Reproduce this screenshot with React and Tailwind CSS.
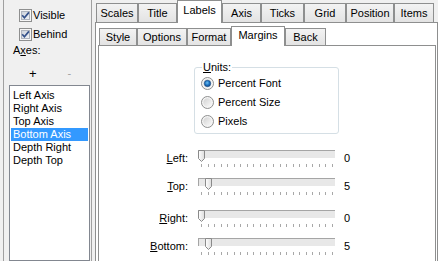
import React from 'react'

const topTabs = [
  { label: 'Scales', w: 'w-[42px]' },
  { label: 'Title', w: 'w-[39px]' },
  { label: 'Labels', w: 'w-[45px]', active: true },
  { label: 'Axis', w: 'w-[39px]' },
  { label: 'Ticks', w: 'w-[43px]' },
  { label: 'Grid', w: 'w-[42px]' },
  { label: 'Position', w: 'w-[48px]' },
  { label: 'Items', w: 'w-[40px]' },
]

const subTabs = [
  { label: 'Style', w: 'w-[38px]' },
  { label: 'Options', w: 'w-[50px]' },
  { label: 'Format', w: 'w-[44px]' },
  { label: 'Margins', w: 'w-[54px]', active: true },
  { label: 'Back', w: 'w-[41px]' },
]

const axes = ['Left Axis', 'Right Axis', 'Top Axis', 'Bottom Axis', 'Depth Right', 'Depth Top']

function CheckBox() {
  return (
    <svg width="13" height="13" viewBox="0 0 13 13" className="shrink-0">
      <defs>
        <linearGradient id="cbin" x1="0" y1="0" x2="1" y2="1">
          <stop offset="0" stopColor="#cbd1da" />
          <stop offset="1" stopColor="#f3f5f8" />
        </linearGradient>
      </defs>
      <rect x="0.5" y="0.5" width="12" height="12" fill="#f6f6f6" stroke="#8e8f8f" />
      <rect x="2.5" y="2.5" width="8" height="8" fill="url(#cbin)" stroke="#aeb4be" />
      <path d="M3.2 6.3 L5.4 8.8 L9.9 3.4" fill="none" stroke="#34518a" strokeWidth="1.7" />
    </svg>
  )
}

function Radio({ on }) {
  return (
    <svg width="13" height="13" viewBox="0 0 13 13" className="shrink-0">
      <defs>
        <linearGradient id="rdin" x1="0" y1="0" x2="1" y2="1">
          <stop offset="0" stopColor="#d2d2d2" />
          <stop offset="1" stopColor="#fafafa" />
        </linearGradient>
        <radialGradient id="rdot" cx="0.45" cy="0.4" r="0.6">
          <stop offset="0" stopColor="#6fc0f2" />
          <stop offset="0.6" stopColor="#1a70c0" />
          <stop offset="1" stopColor="#1b4f8c" />
        </radialGradient>
      </defs>
      <circle cx="6.5" cy="6.5" r="6" fill="#f4f4f4" stroke="#8e8f8f" />
      <circle cx="6.5" cy="6.5" r="4.2" fill="url(#rdin)" />
      {on && <circle cx="6.5" cy="6.5" r="3.2" fill="url(#rdot)" stroke="#1a4a80" strokeWidth="0.6" />}
    </svg>
  )
}

function Tab({ label, w, active, small }) {
  if (active) {
    return (
      <div className={`${w} ${small ? 'h-[20px] pb-[3px]' : 'h-[23px] pb-[4px]'} relative z-10 -mb-px bg-white border border-b-0 border-[#8e8f8f] flex items-center justify-center`}>
        {label}
      </div>
    )
  }
  return (
    <div className={`${w} ${small ? 'h-[17px]' : 'h-[19px]'} bg-gradient-to-b from-[#f3f3f3] to-[#e3e3e3] border border-b-0 border-[#8e8f8f] flex items-center justify-center`}>
      {label}
    </div>
  )
}

function Slider({ label, akey, value, pos, className = '' }) {
  return (
    <div className={`flex items-start h-[28px] ${className}`}>
      <div className="w-[89px] text-right pt-[2px] leading-[13px]">
        <span className="underline">{akey}</span>
        {label.slice(1)}
      </div>
      <div className="ml-[10px] w-[137px] flex flex-col relative">
        <div className="h-[8px] bg-[#e8e8e8] border-t border-l border-[#a5a5a5]" />
        <svg width="7" height="12" viewBox="0 0 7 12" className={`absolute top-0 ${pos}`}>
          <defs>
            <linearGradient id="thb" x1="0" y1="0" x2="1" y2="0">
              <stop offset="0" stopColor="#ffffff" />
              <stop offset="1" stopColor="#dcdcdc" />
            </linearGradient>
          </defs>
          <path d="M0.5 0.5 H6.5 V8.5 L3.5 11.5 L0.5 8.5 Z" fill="url(#thb)" stroke="#8a8a8a" />
        </svg>
        <div className="flex justify-between pl-[3px] pr-[2px] mt-[6px]">
          {Array.from({ length: 21 }).map((_, i) => (
            <div key={i} className="w-px h-[3px] bg-[#a8a8a8]" />
          ))}
        </div>
      </div>
      <div className="ml-[9px] pt-[2px] leading-[13px]">{value}</div>
    </div>
  )
}

export default function App() {
  return (
    <div className="w-[438px] h-[261px] bg-[#f0f0f0] flex overflow-hidden text-[11px] leading-[13px] text-black font-['Liberation_Sans',Arial,sans-serif]">
      {/* left panel */}
      <div className="ml-[3px] w-[89px] h-full border-l border-r border-[#a0a0a0] flex flex-col shrink-0">
        <div className="pt-[8px] pl-[15px] flex flex-col gap-[5px]">
          <div className="flex items-center h-[14px] gap-[1px]">
            <CheckBox />
            <span>Visible</span>
          </div>
          <div className="flex items-center h-[14px] gap-[1px]">
            <CheckBox />
            <span>Behind</span>
          </div>
        </div>
        <div className="pl-[9px] mt-[3px]">
          A<span className="underline">x</span>es:
        </div>
        <div className="flex h-[14px] mt-[9px] items-center">
          <span className="ml-[25px] text-[13px]">+</span>
          <span className="ml-[31px] text-[#a0a0a0]">-</span>
        </div>
        <div className="ml-[5px] mr-px mt-[5px] flex-1 bg-white border border-[#828790] pt-[3px]">
          {axes.map((a) => (
            <div
              key={a}
              className={`h-[13px] leading-[13px] mx-px pl-[2px] ${a === 'Bottom Axis' ? 'bg-[#3399ff] text-white' : ''}`}
            >
              {a}
            </div>
          ))}
        </div>
      </div>

      {/* tab control */}
      <div className="ml-[3px] flex-1 flex flex-col min-w-0">
        <div className="h-[22px] flex items-end pl-[1px] shrink-0">
          {topTabs.map((t) => (
            <Tab key={t.label} {...t} />
          ))}
        </div>
        <div className="flex-1 bg-white border-l border-t border-r border-[#8e8f8f] flex flex-col pl-[2px] pr-px">
          <div className="h-[21px] flex items-end pl-px mt-[1px] shrink-0">
            {subTabs.map((t) => (
              <Tab key={t.label} {...t} small />
            ))}
          </div>
          <div className="flex-1 bg-white border-l border-t border-r border-[#8e8f8f] flex flex-col">
            <fieldset className="ml-[95px] mt-[15px] w-[145px] border border-[#d5dfe5] rounded-[3px] pl-[6px] pb-[2px]">
              <legend className="ml-[1px] px-[1px] leading-[13px]">
                <span className="underline">U</span>nits:
              </legend>
              <div className="flex flex-col">
                {[
                  ['Percent Font', true],
                  ['Percent Size', false],
                  ['Pixels', false],
                ].map(([l, on]) => (
                  <div key={l} className="h-[19px] flex items-center gap-[4px]">
                    <Radio on={on} />
                    <span>{l}</span>
                  </div>
                ))}
              </div>
            </fieldset>
            <div className="mt-[16px] flex flex-col">
              <Slider label="Left:" akey="L" value="0" pos="left-0" />
              <Slider label="Top:" akey="T" value="5" pos="left-[7px]" />
              <Slider label="Right:" akey="R" value="0" pos="left-0" className="mt-[4px]" />
              <Slider label="Bottom:" akey="B" value="5" pos="left-[7px]" />
            </div>
          </div>
        </div>
      </div>
    </div>
  )
}
